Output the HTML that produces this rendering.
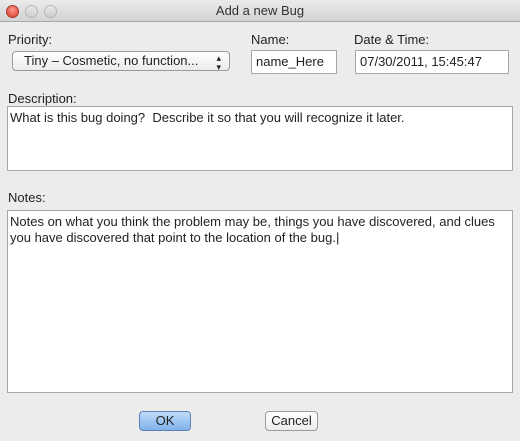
<!DOCTYPE html>
<html><head><style>
body{margin:0;width:520px;height:441px;background:#ececec;font-family:"Liberation Sans",sans-serif;font-size:13px;color:#222;position:relative;overflow:hidden}
.a{position:absolute}
.title{left:0;top:0;width:520px;height:21px;background:linear-gradient(#ebebeb,#d3d3d3);border-bottom:1px solid #a8a8a8;text-align:center;line-height:22px;font-size:13px;color:#333}
.dot{width:11px;height:11px;border-radius:50%;top:5px;border:1px solid #b5b5b5;background:linear-gradient(#e8e8e8,#cfcfcf)}
.field{background:#fff;border:1px solid #a8a8a8;box-sizing:border-box;padding-left:4px}
.btn{border:1px solid #9a9a9a;border-radius:4px;background:linear-gradient(#fff,#ececec);text-align:center;box-sizing:border-box;line-height:17px}
</style></head><body>
<div class="a title">Add a new Bug</div>
<div class="a dot" style="left:6px;background:radial-gradient(circle at 50% 35%,#ff9a8f,#d9362b);border-color:#a8382f"></div>
<div class="a dot" style="left:25px"></div>
<div class="a dot" style="left:44px"></div>
<div class="a" style="left:8px;top:32px">Priority:</div>
<div class="a btn" style="left:12px;top:51px;width:218px;height:20px;text-align:left;padding-left:11px;border-radius:4px">Tiny – Cosmetic, no function...<span class="a" style="right:8px;top:0;font-size:9px;line-height:9px;top:2px">▴<br>▾</span></div>
<div class="a" style="left:251px;top:32px">Name:</div>
<div class="a field" style="left:251px;top:50px;width:86px;height:24px;line-height:22px">name_Here</div>
<div class="a" style="left:354px;top:32px">Date &amp; Time:</div>
<div class="a field" style="left:355px;top:50px;width:154px;height:24px;line-height:22px">07/30/2011, 15:45:47</div>
<div class="a" style="left:8px;top:91px">Description:</div>
<div class="a field" style="left:7px;top:106px;width:506px;height:65px;padding:3px 2px">What is this bug doing?&nbsp; Describe it so that you will recognize it later.</div>
<div class="a" style="left:8px;top:190px">Notes:</div>
<div class="a field" style="left:7px;top:210px;width:506px;height:183px;padding:3px 2px;line-height:16px">Notes on what you think the problem may be, things you have discovered, and clues you have discovered that point to the location of the bug.|</div>
<div class="a btn" style="left:139px;top:411px;width:52px;height:20px;background:linear-gradient(#bfdcf8,#7fb2ea);border-color:#5d83b5">OK</div>
<div class="a btn" style="left:265px;top:411px;width:53px;height:20px">Cancel</div>
</body></html>
